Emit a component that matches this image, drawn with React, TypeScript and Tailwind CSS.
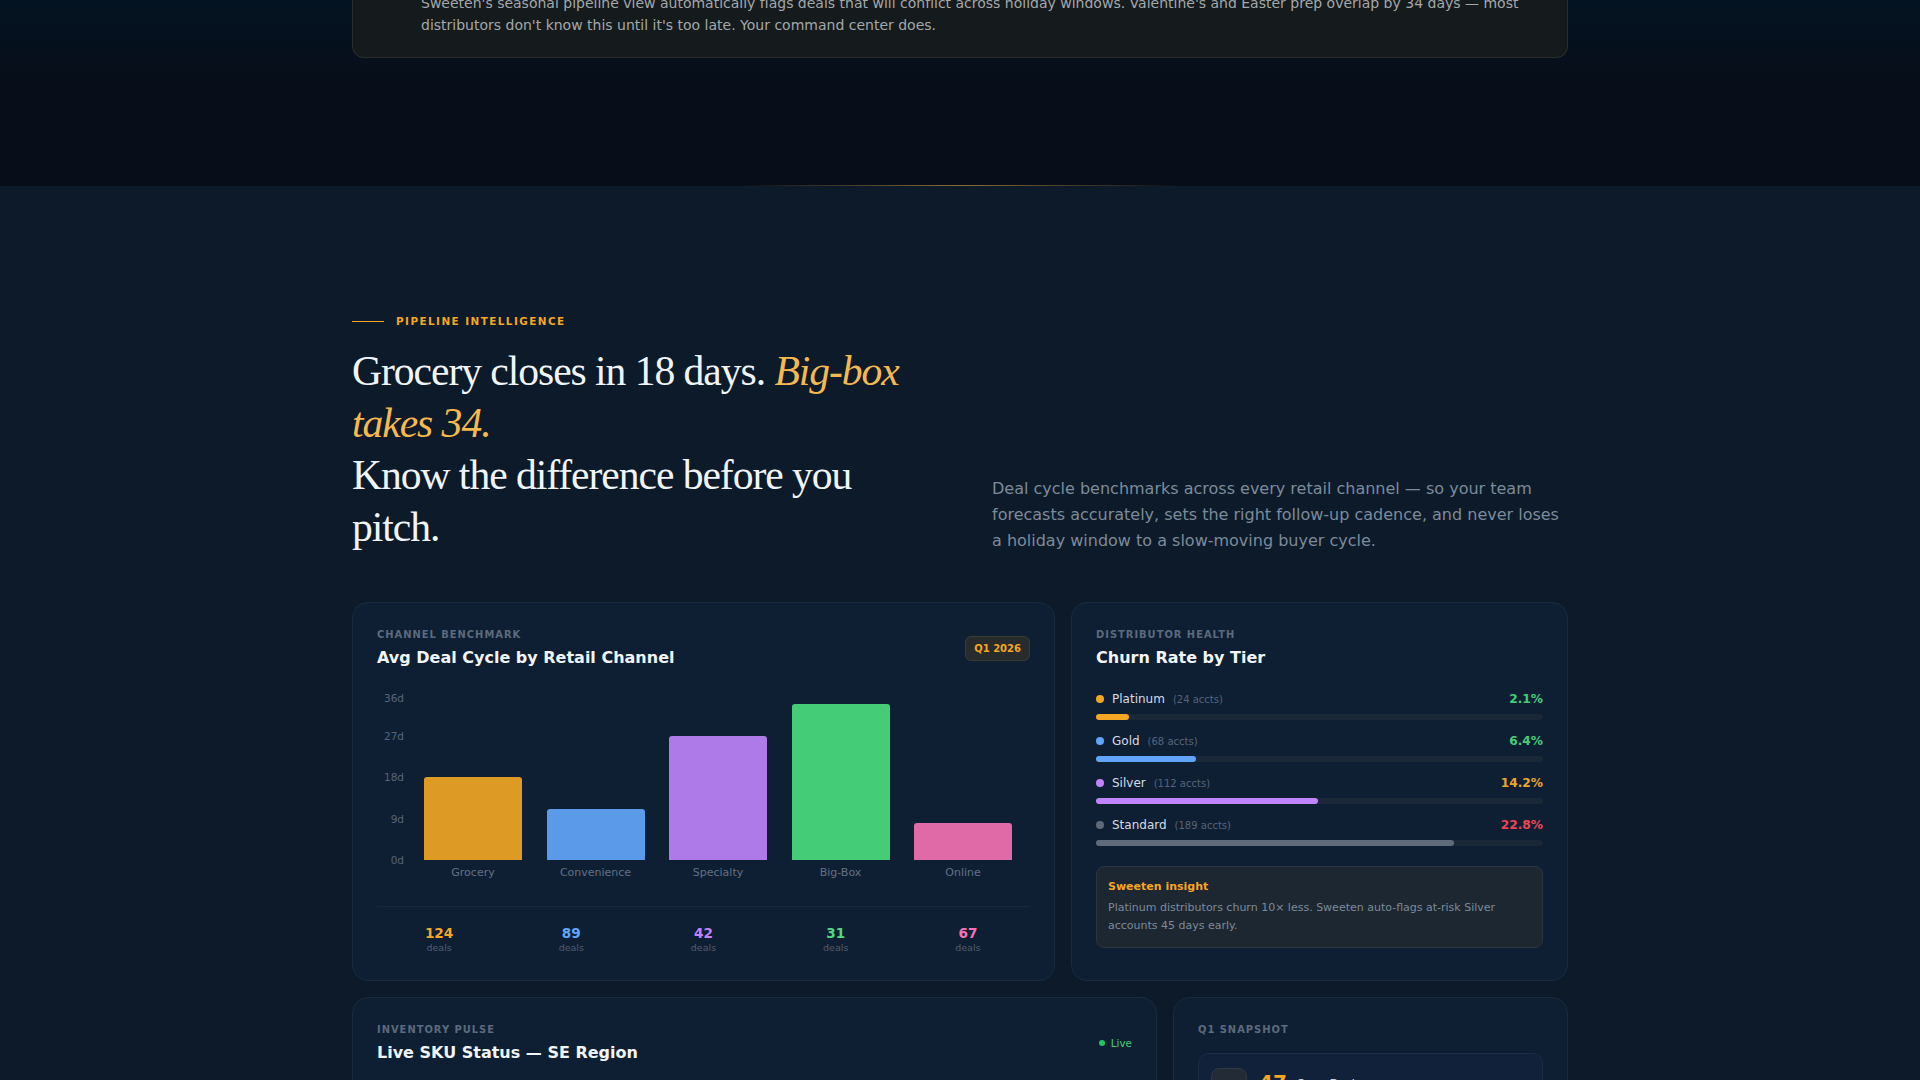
const bars = [
  { name: 'Grocery', h: 'h-[83px]', color: 'bg-[#dd9a24]' },
  { name: 'Convenience', h: 'h-[51px]', color: 'bg-[#5b9ae8]' },
  { name: 'Specialty', h: 'h-[124px]', color: 'bg-[#ae7ae8]' },
  { name: 'Big-Box', h: 'h-[156px]', color: 'bg-[#44cc77]' },
  { name: 'Online', h: 'h-[37px]', color: 'bg-[#e06aa8]' },
];

const ticks = [
  { label: '36d', mt: 'mt-0' },
  { label: '27d', mt: 'mt-[24px]' },
  { label: '18d', mt: 'mt-[27px]' },
  { label: '9d', mt: 'mt-[28px]' },
  { label: '0d', mt: 'mt-[27px]' },
];

const deals = [
  { n: '124', color: 'text-[#f5a623]' },
  { n: '89', color: 'text-[#60a5fa]' },
  { n: '42', color: 'text-[#c084fc]' },
  { n: '31', color: 'text-[#4ade80]' },
  { n: '67', color: 'text-[#f472b6]' },
];

const tiers = [
  { name: 'Platinum', accts: '(24 accts)', pct: '2.1%', pctColor: 'text-[#44cc77]', dot: 'bg-[#f5a623]', w: 'w-[7.4%]' },
  { name: 'Gold', accts: '(68 accts)', pct: '6.4%', pctColor: 'text-[#44cc77]', dot: 'bg-[#60a5fa]', w: 'w-[22.4%]' },
  { name: 'Silver', accts: '(112 accts)', pct: '14.2%', pctColor: 'text-[#eba52c]', dot: 'bg-[#c084fc]', w: 'w-[49.7%]' },
  { name: 'Standard', accts: '(189 accts)', pct: '22.8%', pctColor: 'text-[#ee4455]', dot: 'bg-[#5f6b7a]', w: 'w-[80%]' },
];

function CardLabel({ children }: { children: React.ReactNode }) {
  return <div className="text-[9.92px] leading-[14px] font-bold tracking-[0.1em] text-[#5c6a7e] uppercase">{children}</div>;
}

function CardTitle({ children }: { children: React.ReactNode }) {
  return <div className="mt-[4px] text-[16px] leading-[24px] font-bold text-[#f1f5f9]">{children}</div>;
}

export default function App() {
  return (
    <div className="h-[1080px] overflow-hidden bg-[#0c1a2a] font-['DejaVu_Sans',sans-serif]">
      {/* previous section, cut by the top of the page */}
      <section className="h-[186px] bg-gradient-to-b from-[#041322] to-[#070e19] to-[45%] relative">
        <div className="flow-root mx-auto w-[1216px] h-[58px] bg-[#151a1c] border border-[#2a2d2c] border-t-0 rounded-b-[12px] pl-[68px] pr-[40px] text-[14px] leading-[22.4px] text-[#a3a8ab]">
          <p className="-mt-[8px]">
            Sweeten's seasonal pipeline view automatically flags deals that will conflict across holiday windows. Valentine's and Easter prep overlap by 34 days — most distributors don't know this until it's too late. Your command center does.
          </p>
        </div>
        <div className="absolute bottom-0 left-1/2 -translate-x-1/2 w-[440px] h-px bg-gradient-to-r from-transparent via-[#8a6c34] to-transparent"></div>
      </section>

      <section className="mx-auto w-[1216px] pt-[128px]">
        <div className="flex items-center gap-[12px]">
          <div className="w-[32px] h-px bg-[#f5a623]"></div>
          <div className="text-[10.4px] leading-[14px] font-bold tracking-[0.14em] text-[#f5a623]">PIPELINE INTELLIGENCE</div>
        </div>

        <div className="mt-[17px] grid grid-cols-2 gap-[64px] items-end">
          <h2 className="font-['Liberation_Serif',serif] text-[41.6px] leading-[52px] font-normal tracking-[-0.025em] text-[#f1f5f9]">
            Grocery closes in 18 days. <em className="text-[#f5b94e]">Big-box takes 34.</em>
            <br />
            Know the difference before you pitch.
          </h2>
          <p className="-mb-[1px] text-[16px] leading-[26px] text-[#7d8a9a]">
            Deal cycle benchmarks across every retail channel — so your team forecasts accurately, sets the right follow-up cadence, and never loses a holiday window to a slow-moving buyer cycle.
          </p>
        </div>

        <div className="mt-[49px] flex gap-[16px]">
          {/* channel benchmark */}
          <div className="w-[703px] h-[379px] shrink-0 bg-[#0f1f33] border border-[#1a2b3f] rounded-[16px] px-[24px] pt-[25px]">
            <div className="flex items-center justify-between">
              <div>
                <CardLabel>CHANNEL BENCHMARK</CardLabel>
                <CardTitle>Avg Deal Cycle by Retail Channel</CardTitle>
              </div>
              <div className="h-[25px] px-[8px] -mt-[2px] flex items-center bg-[#282b2c] border border-[#3a3a32] rounded-[6px] text-[10px] font-bold text-[#f5a623]">Q1 2026</div>
            </div>

            <div className="mt-[21px] flex">
              <div className="w-[27px] flex flex-col items-end text-[10.5px] leading-[14px] text-[#56657a]">
                {ticks.map((t) => (
                  <span key={t.label} className={t.mt}>{t.label}</span>
                ))}
              </div>
              <div className="flex-1 pl-[20px] pr-[18px] flex gap-[24.5px]">
                {bars.map((b) => (
                  <div key={b.name} className="flex-1 flex flex-col">
                    <div className="h-[169px] flex items-end">
                      <div className={`w-full rounded-t-[3px] ${b.h} ${b.color}`}></div>
                    </div>
                    <div className="mt-[6px] text-center text-[11px] leading-[14px] text-[#647084]">{b.name}</div>
                  </div>
                ))}
              </div>
            </div>

            <div className="mt-[26px] pt-[17px] border-t border-[#16283c] grid grid-cols-5 gap-[8px]">
              {deals.map((d) => (
                <div key={d.n} className="text-center">
                  <div className={`text-[13.6px] leading-[18px] font-bold ${d.color}`}>{d.n}</div>
                  <div className="text-[9.5px] leading-[12px] text-[#4f5d71]">deals</div>
                </div>
              ))}
            </div>
          </div>

          {/* churn */}
          <div className="flex-1 h-[379px] bg-[#0f1f33] border border-[#1a2b3f] rounded-[16px] px-[24px] pt-[25px]">
            <CardLabel>DISTRIBUTOR HEALTH</CardLabel>
            <CardTitle>Churn Rate by Tier</CardTitle>
            <div className="mt-[19px] flex flex-col gap-[11px]">
              {tiers.map((t) => (
                <div key={t.name}>
                  <div className="flex items-center h-[20px]">
                    <div className={`w-[8px] h-[8px] rounded-full ${t.dot}`}></div>
                    <span className="ml-[8px] text-[12px] text-[#d5dbe3]">{t.name}</span>
                    <span className="ml-[8px] text-[10px] text-[#56637a]">{t.accts}</span>
                    <span className={`ml-auto text-[12.2px] font-bold ${t.pctColor}`}>{t.pct}</span>
                  </div>
                  <div className="mt-[5px] h-[6px] rounded-full bg-[#1a2838]">
                    <div className={`h-full rounded-full ${t.dot} ${t.w}`}></div>
                  </div>
                </div>
              ))}
            </div>
            <div className="mt-[20px] bg-[#1c2732] border border-[#2a3540] rounded-[8px] pl-[12px] pr-[12px] pt-[13px] pb-[12px]">
              <div className="-ml-px text-[11px] leading-[14px] font-bold text-[#f5a623]">Sweeten insight</div>
              <div className="-ml-px mt-[5px] text-[11px] leading-[18px] text-[#7d8a9a]">Platinum distributors churn 10× less. Sweeten auto-flags at-risk Silver accounts 45 days early.</div>
            </div>
          </div>
        </div>

        <div className="mt-[16px] flex gap-[16px]">
          {/* inventory pulse */}
          <div className="w-[805px] shrink-0 h-[200px] bg-[#0f1f33] border border-[#1a2b3f] rounded-t-[16px] px-[24px] pt-[25px] flex justify-between items-start">
            <div>
              <CardLabel>INVENTORY PULSE</CardLabel>
              <CardTitle>Live SKU Status — SE Region</CardTitle>
            </div>
            <div className="mt-[13px] flex items-center gap-[6px] text-[10.4px] leading-[14px] text-[#44cc77]">
              <span className="w-[6px] h-[6px] rounded-full bg-[#22c55e]"></span>
              Live
            </div>
          </div>

          {/* Q1 snapshot */}
          <div className="flex-1 h-[200px] bg-[#0f1f33] border border-[#1a2b3f] rounded-t-[16px] px-[24px] pt-[25px]">
            <CardLabel>Q1 SNAPSHOT</CardLabel>
            <div className="mt-[16px] h-[100px] bg-[#12213a] border border-[#1a2b43] rounded-[10px] pt-[14px] px-[12px] flex">
              <div className="w-[36px] h-[36px] rounded-[8px] bg-[#232c36] border border-[#2f3842]"></div>
              <div className="ml-[12px] -mt-[2px] text-[20px] leading-[32px] font-bold text-[#f5a623]">47</div>
              <div className="ml-[10px] mt-[9px] text-[11px] leading-[14px] text-[#e2e8f0]">Open Deals</div>
            </div>
          </div>
        </div>
      </section>
    </div>
  );
}
